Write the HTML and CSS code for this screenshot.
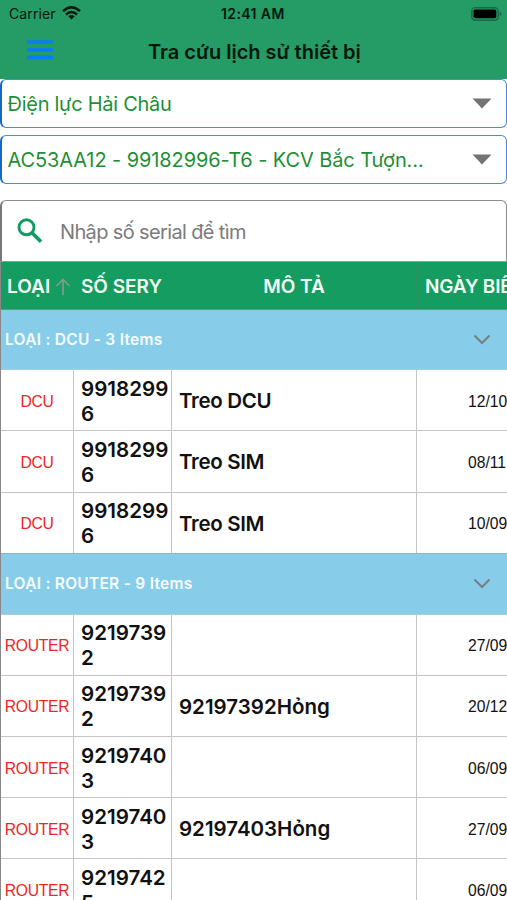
FILE: index.html
```html
<!DOCTYPE html>
<html lang="vi">
<head>
<meta charset="utf-8">
<title>Tra cứu lịch sử thiết bị</title>
<link rel="stylesheet" href="styles.css">
</head>
<body>
<header class="top">
  <div class="status">
    <span class="carrier">Carrier</span>
    <svg class="wifi" width="19" height="14" viewBox="0 0 19 14"><g fill="none" stroke="#021a0e" stroke-width="2.4"><path d="M1 5.200Q9.500-2.600 18 5.200"/><path d="M4 8.500Q9.500 3.400 15 8.500"/></g><path d="M6.300 10.300Q9.500 7.600 12.700 10.300L9.500 13.600Z" fill="#021a0e"/></svg>
    <span class="clock">12:41 AM</span>
    <svg class="battery" width="31" height="14" viewBox="0 0 31 14"><rect x=".8" y=".8" width="26.400" height="12.400" rx="3.600" fill="none" stroke="#176b44" stroke-width="1.500"/><rect x="2.500" y="2.500" width="22.800" height="8.800" rx="1.800" fill="#000"/><path d="M28.700 4.800v4.200q1.800-.6 1.800-2.100t-1.800-2.100Z" fill="#176b44"/></svg>
  </div>
  <div class="nav">
    <svg class="menu" width="26" height="20" viewBox="0 0 26 20"><path d="M0 2.200h26M0 9.800h26M0 17.300h26" stroke="#0a7df0" stroke-width="3.800"/></svg>
    <h1 class="title">Tra cứu lịch sử thiết bị</h1>
  </div>
</header>
<main>
  <div class="select"><span class="unit">Điện lực Hải Châu</span><svg width="20" height="11" viewBox="0 0 20 11"><path d="M.5.500h19L10 10.500Z" fill="#737373"/></svg></div>
  <div class="select"><span class="station">AC53AA12 - 99182996-T6 - KCV Bắc Tượn...</span><svg width="20" height="11" viewBox="0 0 20 11"><path d="M.5.500h19L10 10.500Z" fill="#737373"/></svg></div>
  <div class="search">
    <svg width="26" height="26" viewBox="0 0 26 26" fill="none" stroke="#129c61"><circle cx="9.500" cy="9.300" r="7.500" stroke-width="2.900"/><path d="M15 14.800L24 23.800" stroke-width="3.700"/></svg>
    <span>Nhập số serial để tìm</span>
  </div>
  <section class="table">
    <div class="row head">
      <div class="h-type"><span>LOẠI</span><svg width="16" height="18" viewBox="0 0 16 18"><path d="M8 17V1.500M1.500 8L8 1.500L14.500 8" fill="none" stroke="#7f9d87" stroke-width="1.700"/></svg></div>
      <div class="h-serial"><span>SỐ SERY</span></div><div class="h-desc"><span>MÔ TẢ</span></div><div class="h-date"><span>NGÀY BIẾ</span></div>
    </div>
    <div class="group first"><span>LOẠI : DCU - 3 Items</span><svg width="18" height="11" viewBox="0 0 18 11"><path d="M1.500 1.500L9 9L16.500 1.500" fill="none" stroke="#777e82" stroke-width="2"/></svg></div>
    <div class="row"><div class="type"><span>DCU</span></div><div class="serial">99182996</div><div class="desc"><span class="action">Treo DCU</span></div><div class="date">12/10</div></div>
    <div class="row"><div class="type"><span>DCU</span></div><div class="serial">99182996</div><div class="desc"><span class="action">Treo SIM</span></div><div class="date">08/11</div></div>
    <div class="row last"><div class="type"><span>DCU</span></div><div class="serial">99182996</div><div class="desc"><span class="action">Treo SIM</span></div><div class="date">10/09</div></div>
    <div class="group"><span>LOẠI : ROUTER - 9 Items</span><svg width="18" height="11" viewBox="0 0 18 11"><path d="M1.500 1.500L9 9L16.500 1.500" fill="none" stroke="#777e82" stroke-width="2"/></svg></div>
    <div class="row"><div class="type"><span>ROUTER</span></div><div class="serial">92197392</div><div class="desc"></div><div class="date">27/09</div></div>
    <div class="row"><div class="type"><span>ROUTER</span></div><div class="serial">92197392</div><div class="desc"><span>92197392Hỏng</span></div><div class="date">20/12</div></div>
    <div class="row"><div class="type"><span>ROUTER</span></div><div class="serial">92197403</div><div class="desc"></div><div class="date">06/09</div></div>
    <div class="row"><div class="type"><span>ROUTER</span></div><div class="serial">92197403</div><div class="desc"><span>92197403Hỏng</span></div><div class="date">27/09</div></div>
    <div class="row"><div class="type"><span>ROUTER</span></div><div class="serial">92197425</div><div class="desc"></div><div class="date">06/09</div></div>
  </section>
</main>
</body>
</html>
```

FILE: styles.css
```css
* { box-sizing: border-box; }
html, body { height: 900px; overflow: hidden; }
body { margin: 0; background: #fff; color: #111; font-family: Inter, "Liberation Sans", sans-serif; }
svg { display: block; flex: none; }
span { white-space: nowrap; }

.top { height: 79px; background: #259b66; color: #04170d; }
.status { height: 28px; padding: 0 6px 0 9px; display: grid; grid-template-columns: 53px 140px 1fr 31px; align-items: center; }
.carrier { font-size: 14px; letter-spacing: .1px; margin-top: -1px; }
.wifi { margin-top: -2px; }
.clock { font-weight: 600; font-size: 14px; letter-spacing: .4px; margin-top: -1px; margin-left: 19px; }
.battery { margin-left: 1px; margin-top: -1px; }
.nav { height: 51px; display: flex; align-items: flex-start; padding-left: 27px; }
.menu { margin-top: 12px; }
.title { margin: 10px 0 0 95px; font-size: 20px; line-height: 28px; font-weight: 600; letter-spacing: 0; white-space: nowrap; }

.select { height: 49px; margin-bottom: 7px; padding: 0 14px 0 7px; display: flex; align-items: center; justify-content: space-between; border: 1px solid #4a8bd8; border-left: 2px solid #1467c8; border-radius: 6px; background: #fff; color: #1f8f35; font-size: 20px; }
.unit { letter-spacing: -.27px; }
.station { letter-spacing: -.1px; }
.select span { margin-left: -1.500px; }
.search { height: 61px; margin-top: 16px; padding-left: 15px; display: flex; align-items: center; gap: 17px; border: 1px solid #8c8c8c; border-left: 2px solid #777; border-bottom: 0; border-radius: 6px 6px 0 0; color: #7b7b7b; font-size: 20px; letter-spacing: -.64px; }
.search span { padding-top: 1px; }

.table { width: 507px; overflow: hidden; border-left: 1px solid #888; }
.row { display: grid; grid-template-columns: 73px 98px 245px 90px; height: 61.130px; border-bottom: 1px solid #c5c5c5; }
.row > div { display: flex; align-items: center; padding-top: 1px; border-right: 1px solid #c5c5c5; }
.row > div:last-child { border-right: 0; overflow: hidden; white-space: nowrap; }
.last { border-bottom-color: #8fb4c2; }
.head { height: 49px; background: #159c60; color: #f2fff5; border-top: 1px solid #68b992; border-bottom: 1px solid #4f9f83; font-size: 19px; font-weight: 600; }
.row.head > div { padding-top: 2px; border-color: #279460; }
.row .h-type { padding-left: 6px; gap: 5px; }
.row .h-serial { padding-left: 7px; }
.row .h-desc { justify-content: center; }
.row .h-date { padding-left: 8px; letter-spacing: -.2px; }
.group { height: 61.130px; padding: 0 16px 0 4px; display: flex; align-items: center; justify-content: space-between; background: #87cdea; color: #f7fdff; border-bottom: 1px solid #aacbd8; font-size: 15.500px; font-weight: 600; letter-spacing: .26px; }
.first { height: 60.300px; }
.row .type { justify-content: center; padding-top: 3px; color: #ee2525; font-family: "Liberation Sans", Arial, sans-serif; font-size: 15.700px; letter-spacing: -.3px; }
.row .serial { padding-left: 7px; font-size: 20.600px; line-height: 25px; font-weight: 600; word-break: break-all; }
.row .desc { padding-left: 7px; font-size: 20.500px; font-weight: 600; }
.action { letter-spacing: -.32px; }
.row .date { justify-content: flex-start; padding: 3px 0 0 51px; font-family: "Liberation Sans", Arial, sans-serif; font-size: 15.700px; }
```
